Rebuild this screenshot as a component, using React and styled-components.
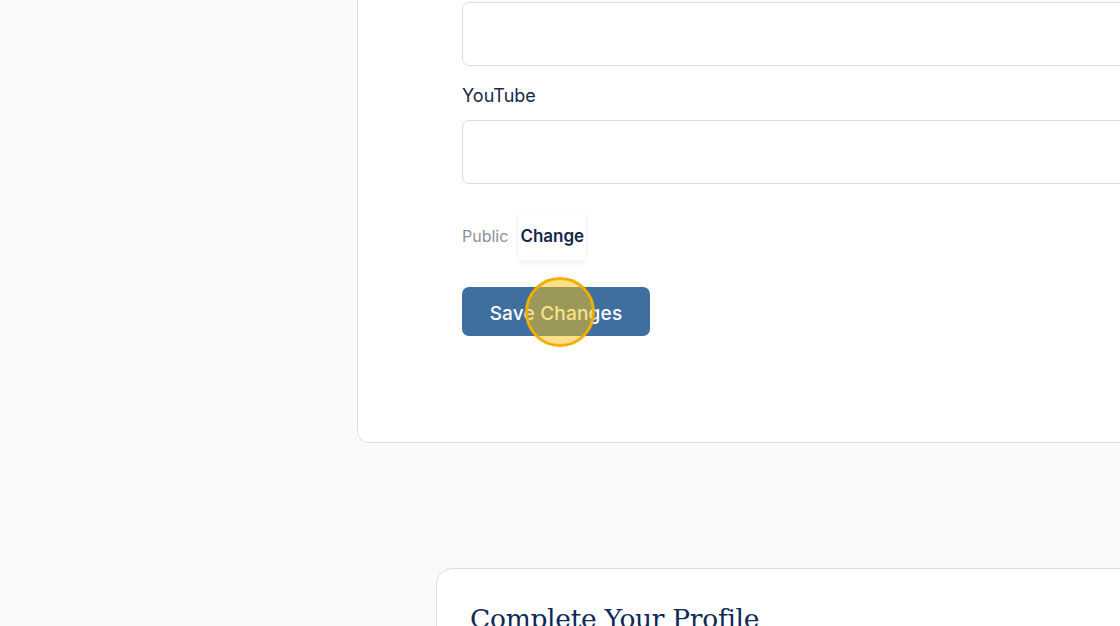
import React from "react";
import styled, { createGlobalStyle } from "styled-components";

const Global = createGlobalStyle`
  html, body { margin: 0; padding: 0; background: #f8f9fb; }
  body { font-family: Inter, "Noto Sans", sans-serif; overflow: hidden; }
`;

const Page = styled.div`
  display: flex;
  flex-direction: column;
  gap: 125px;
  padding-bottom: 200px;
  margin-top: -20px;
`;

const Card = styled.section`
  background: #fff;
  border: 1px solid #dcdde2;
  border-radius: ${(p) => p.$radius || 12}px;
  margin-left: ${(p) => p.$left}px;
  width: 1000px;
  box-sizing: border-box;
  padding: ${(p) => p.$pad};
`;

const Input = styled.div`
  height: 64px;
  width: 900px;
  border: 1.5px solid #dadbe0;
  border-radius: 7px;
  box-sizing: border-box;
  background: #fff;
`;

const Label = styled.label`
  display: block;
  font-size: 18px;
  line-height: 27px;
  color: #18284d;
  margin: 16px 0 11px;
`;

const VisibilityRow = styled.div`
  display: flex;
  align-items: center;
  gap: 11px;
  margin-top: 28px;
`;

const Muted = styled.span`
  font-size: 16px;
  color: #8e9096;
`;

const ChangeButton = styled.button`
  height: 48px;
  padding: 0 1px;
  border: none;
  background: #fff;
  box-shadow: 0 2px 6px rgba(20, 30, 60, 0.08);
  font-family: Inter, sans-serif;
  font-size: 17px;
  font-weight: 600;
  color: #14264d;
`;

const SaveWrap = styled.div`
  position: relative;
  margin-top: 27px;
  width: 188px;
`;

const SaveButton = styled.button`
  width: 188px;
  height: 49px;
  padding: 3px 0 0;
  border: none;
  border-radius: 7px;
  background: #3e6f9f;
  color: #fff;
  font-family: Inter, sans-serif;
  font-size: 19px;
  font-weight: 500;
  letter-spacing: 0.2px;
`;

const ClickMark = styled.span`
  position: absolute;
  left: 63px;
  top: -10px;
  width: 70px;
  height: 70px;
  box-sizing: border-box;
  border-radius: 50%;
  border: 3px solid #f2ae00;
  background: rgba(247, 193, 20, 0.5);
  pointer-events: none;
`;

const Heading = styled.h2`
  margin: 0;
  font-family: "DejaVu Serif", "Liberation Serif", serif;
  font-weight: 500;
  font-size: 26.5px;
  line-height: 32px;
  color: #0f2a55;
  letter-spacing: -0.3px;
`;

export default function App() {
  return (
    <>
      <Global />
      <Page>
        <Card $left={357} $pad="21px 0 106px 104px">
          <Input />
          <Label>YouTube</Label>
          <Input />
          <VisibilityRow>
            <Muted>Public</Muted>
            <ChangeButton>Change</ChangeButton>
          </VisibilityRow>
          <SaveWrap>
            <SaveButton>Save Changes</SaveButton>
            <ClickMark />
          </SaveWrap>
        </Card>
        <Card $left={436} $radius={16} $pad="34px 0 60px 33px">
          <Heading>Complete Your Profile</Heading>
        </Card>
      </Page>
    </>
  );
}
